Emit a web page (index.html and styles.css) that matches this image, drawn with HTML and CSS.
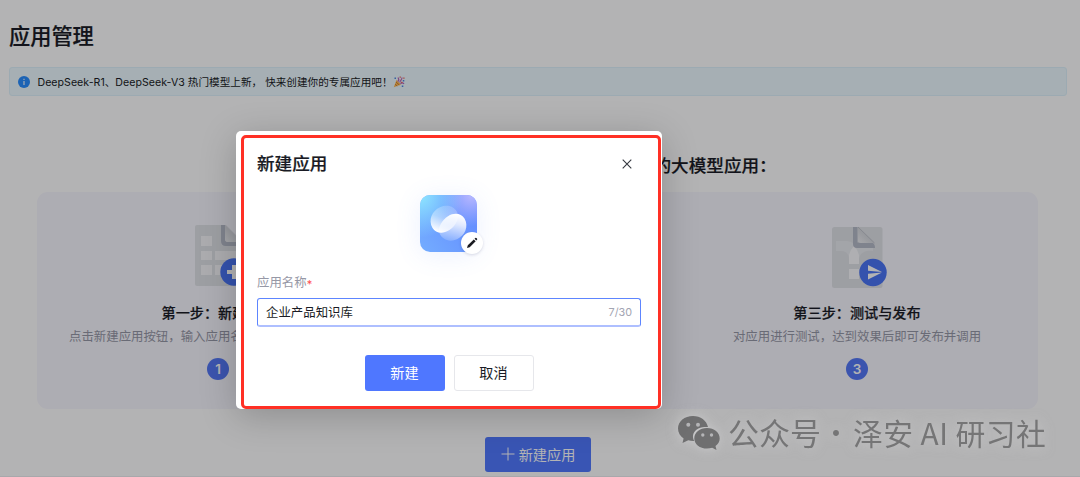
FILE: index.html
```html
<!DOCTYPE html>
<html lang="zh-CN">
<head>
<meta charset="utf-8">
<title>应用管理</title>
<link rel="stylesheet" href="styles.css">
</head>
<body>
<main class="page">
  <h1 class="page-title">应用管理</h1>
  <div class="notice">
    <svg class="notice-icon" viewBox="0 0 12 12"><circle cx="6" cy="6" r="6" fill="#278dff"/><path d="M6 5v4M6 2.8v1.1" stroke="#fff" stroke-width="1.1"/></svg>
    <span class="notice-text">DeepSeek-R1、DeepSeek-V3 热门模型上新， 快来创建你的专属应用吧！</span>
    <svg class="party" viewBox="0 0 12 12"><path d="M.8 11.200 3.500 4l4.500 4.500z" fill="#ffb84c"/><path d="m2 8.200 2.200 2M3 6l3.200 3" stroke="#c97b35" stroke-width=".9"/><path d="M4.800 5.500c1.200-1 1.200-2.500.2-4M6.800 6.500c.5-2.500 2.200-2.500 2.200-5M7.500 7.800c1-1.300 2.200-1 3.600 0" fill="none" stroke="#b765b5" stroke-width="1.200"/><path d="M1.500 1.500H3V3H1.500zM9.800 4h1.500v1.500H9.800zM8.800 9.500h1.500V11H8.800z" fill="#4c89e0"/><path d="M6.600.600h1.200v1.200H6.600zM10.300 1.500h1.200v1.200h-1.200zM8.200 5.800h1.200V7H8.200z" fill="#ef584f"/></svg>
  </div>
  <h2 class="intro">的大模型应用：</h2>
  <section class="steps">
    <article class="step">
      <svg class="step-art" viewBox="0 0 56 64">
        <defs><linearGradient id="fold" x1="0" y1="1" x2=".65" y2=".35"><stop stop-color="#eeeff2"/><stop offset="1" stop-color="#cdd0d6"/></linearGradient></defs>
        <path d="M3 1h29l20 20v38q0 3-3 3H3q-2 0-2-2V3q0-2 2-2" fill="#e0e2e7"/>
        <path d="M27 1h4v14q0 3 3 3h12v4H32q-5 0-5-5z" fill="#b5bac7"/><path d="M31 1 48 18H34q-3 0-3-3z" fill="url(#fold)"/>
        <path d="M7 12h11v10H7zM7 27h11v9H7zM7 41h11v10H7zM21 27h25v9H21zM21 41h25v10H21z" fill="#f5f5f8"/>
        <circle cx="40" cy="48" r="13.700" fill="#4974f5"/><path d="M38 41h4v5h5v4h-5v5h-4v-5h-5v-4h5z" fill="#fff"/>
      </svg>
      <h3>第一步：新建</h3>
      <p class="lead">点击新建应用按钮，输入应用名</p>
      <span class="number">1</span>
    </article>
    <div class="connector"></div>
    <article class="step last">
      <svg class="step-art publish" viewBox="0 0 56 64">
        <rect x="1" y="2" width="50.500" height="61" rx="2.500" fill="#e0e2e7"/>
        <path d="M5 16h9c6 0 9 2 10 6 1-3 3-3 6-3l12 3v4c-9-1-14 3-14 9v4H18v-5c0-5-3-8-8-8H5z" fill="#e9ebef"/>
        <path d="M18 39V30q1-5 5-9 4 4 5 9v9zM18 44h10v10H18z" fill="#fafafc"/>
        <path d="M22 2h4.500v15.500H41q3 1 3 5.500H26q-4 0-4-4z" fill="#b5bac7"/>
        <path d="M27 2 43.500 18H30q-3 0-3-3z" fill="url(#fold)"/>
        <path d="M27 2 43.500 18" stroke="#bfc3ca" stroke-width="1"/>
        <circle cx="42" cy="47.500" r="13.700" fill="#4974f5"/><path d="m37 40 14 7-14-1.200zM37 54.500l14-7-14 1.200z" fill="#fff"/>
      </svg>
      <h3>第三步：测试与发布</h3>
      <p>对应用进行测试，达到效果后即可发布并调用</p>
      <span class="number">3</span>
    </article>
  </section>
  <button class="create"><svg viewBox="0 0 14 14"><path d="M7 .5v13M.5 7h13" stroke="#fff" stroke-width="1"/></svg>新建应用</button>
</main>
<div class="shade"></div>
<div class="watermark">
  <svg viewBox="0 0 42 34"><path d="M15 0C6.500 0 0 5.400 0 12.500c0 4.200 2.200 7.600 5.600 10L4.500 27l5.700-2.700q2.700.8 6 .7C12 16 20 10 30 11 28.600 4.500 22.600 0 15 0z" fill="#6f6f70"/><path d="M29 12c-7.200 0-12.700 4.600-12.700 10.400S21.800 32.500 29 32.500q3 0 5.200-.7l4.300 2.200-1-4c2.600-1.900 4.200-4.500 4.200-7.600C41.700 16.600 36.200 12 29 12z" fill="#6f6f70"/><g fill="#b5b5b7"><circle cx="10.300" cy="8.800" r="2"/><circle cx="20" cy="8.800" r="2"/><circle cx="24.800" cy="19" r="1.700"/><circle cx="33.500" cy="19" r="1.700"/></g></svg>
  <span class="wm-kind">公众号</span><span class="wm-dot">·</span><span class="wm-name">泽安 AI 研习社</span>
</div>
<section class="modal">
  <div class="modal-frame">
    <header class="modal-head"><h2>新建应用</h2><svg class="close" viewBox="0 0 10 10"><path d="m.7.700 8.600 8.600M9.300.7.700 9.300" stroke="#34373f" stroke-width="1.100"/></svg></header>
    <div class="app-icon">
      <svg class="app-art" viewBox="0 0 57 57">
        <defs>
          <linearGradient id="base" x1="0" y1="1" x2="1" y2=".3"><stop stop-color="#74adff"/><stop offset="1" stop-color="#638bff"/></linearGradient>
          <radialGradient id="cyan" cx="0" cy="0" r=".75"><stop stop-color="#8ee8ff"/><stop offset="1" stop-color="#8ee8ff" stop-opacity="0"/></radialGradient>
          <radialGradient id="lilac" cx=".9" cy="0" r=".55"><stop stop-color="#b9b8ff"/><stop offset="1" stop-color="#b9b8ff" stop-opacity="0"/></radialGradient>
          <linearGradient id="lobe1" gradientUnits="userSpaceOnUse" x1="28" y1="12" x2="19" y2="37"><stop stop-color="#fff" stop-opacity=".2"/><stop offset=".45" stop-color="#fff" stop-opacity=".4"/><stop offset="1" stop-color="#fff"/></linearGradient>
          <linearGradient id="lobe2" gradientUnits="userSpaceOnUse" x1="36" y1="19" x2="29" y2="45"><stop stop-color="#fff"/><stop offset=".35" stop-color="#fff" stop-opacity=".8"/><stop offset="1" stop-color="#fff" stop-opacity=".2"/></linearGradient>
        </defs>
        <rect width="57" height="57" rx="10" fill="url(#base)"/><rect width="57" height="57" rx="10" fill="url(#lilac)"/><rect width="57" height="57" rx="10" fill="url(#cyan)"/>
        <path d="M12.500 33C8 25 12 16 20 12.300c7-3.300 15-.8 17.600 6.100 1.600 6-2.500 13-8.600 16.900-6.500 4.200-13.500 2.700-16.500-2.300z" fill="url(#lobe1)"/>
        <path d="M44.500 23.500c4.500 8 .5 17-7.500 20.700-7 3.300-15 .8-17.600-6.100-1.600-6 2.500-13 8.600-16.900 6.500-4.200 13.500-2.700 16.500 2.300z" fill="url(#lobe2)"/>
      </svg>
      <span class="edit"><svg viewBox="0 0 12 12"><path d="m1 11 .8-2.800 6-5.800 1.900 1.900-6 5.900zM8.500 1.700l.9-.8q.5-.4 1 .1l.7.700q.4.500 0 .9l-.8.900z" fill="#191a20"/></svg></span>
    </div>
    <label class="field-label">应用名称<span>*</span></label>
    <div class="field"><span>企业产品知识库</span><span class="count">7/30</span></div>
    <div class="actions"><button class="primary">新建</button><button class="secondary">取消</button></div>
  </div>
</section>
</body>
</html>
```
FILE: styles.css
```css
* { box-sizing: border-box; }
body {
  position: relative;
  width: 1080px;
  height: 477px;
  margin: 0;
  overflow: hidden;
  background: #fff;
  color: #191b24;
  font-family: Inter, "Noto Sans CJK SC", sans-serif;
}
h1, h2, h3, p { margin: 0; }
h1, h2, h3 { -webkit-text-stroke: .2px currentColor; }
button { padding: 0; font-family: inherit; }
svg { display: block; flex: none; }
.page { height: 477px; padding: 21px 13px 0 9px; border-bottom: 1px solid #f0f0f2; }
.page-title { height: 46px; font-size: 21.2px; line-height: 30px; font-weight: 500; }
.notice {
  display: flex;
  align-items: center;
  height: 29px;
  padding-left: 7.500px;
  border: 1px solid #dff3fc;
  border-radius: 3px;
  background: #ecf9ff;
  font-size: 10.6px;
}
.notice-icon { width: 12px; height: 12px; margin-right: 8px; }
.notice-text { white-space: pre; letter-spacing: .025px; }
.party { width: 12px; height: 12px; margin-left: 0; }
.intro { height: 96px; padding: 57px 0 0 644.500px; font-size: 17.600px; line-height: 26px; font-weight: 500; white-space: nowrap; }
.steps {
  display: grid;
  grid-template-columns: 319px 319px 319px;
  width: 1001px;
  height: 217px;
  margin-left: 28px;
  padding: 32px 22px 0 21.500px;
  border-radius: 11px;
  background: #f7f6fe;
}
.step { display: flex; flex-direction: column; align-items: center; white-space: nowrap; }
.last { padding-left: 2px; }
.step-art { width: 56px; height: 64px; margin-left: 8px; }
.publish { margin: 1px 0 -1px 4px; }
.step h3 { margin-top: 14px; font-size: 14.150px; line-height: 22px; font-weight: 500; }
.step:first-child h3 { align-self: flex-start; margin-left: 103px; }
.step p { margin-top: 3px; color: #9698a6; font-size: 12.420px; line-height: 19px; }
.step .lead { align-self: flex-start; margin-left: 10.500px; }
.number {
  width: 22px;
  height: 22px;
  margin-top: 12px;
  border-radius: 50%;
  background: #5478f6;
  color: #fff;
  font-size: 13.500px;
  line-height: 22px;
  font-weight: 600;
  text-align: center;
}
.connector { width: 258px; height: 2px; margin: 144px 0 0; background: #ccdaf8; }
.create {
  display: flex;
  align-items: center;
  justify-content: center;
  gap: 4px;
  width: 106px;
  height: 35px;
  margin: 28px 0 0 476px;
  padding-bottom: 1px;
  border: 0;
  border-radius: 3px;
  background: #5179ff;
  color: #fff;
  font-size: 14.150px;
}
.create svg { width: 14px; height: 14px; }
.shade { position: absolute; inset: 0; background: rgba(2, 2, 6, .3); }
.watermark {
  position: absolute;
  left: 678px;
  top: 408px;
  display: flex;
  align-items: center;
  height: 50px;
  color: #757576;
  font-family: "Noto Sans CJK SC", sans-serif;
  font-size: 30px;
  line-height: 46px;
  font-weight: 400;
  white-space: nowrap;
  filter: drop-shadow(0 0 6px rgba(220, 220, 222, .55));
}
.watermark svg { width: 42px; height: 34px; }
.wm-kind { margin: -2px 0 0 8px; font-size: 31px; }
.wm-dot { width: 30px; margin-top: -2px; font-size: 28px; text-align: center; }
.wm-name { margin: -2px 0 0 2px; font-size: 29.800px; letter-spacing: .45px; }
.modal {
  position: absolute;
  left: 236px;
  top: 131px;
  width: 426px;
  height: 278px;
  padding: 4px 1px 0 5px;
  border-radius: 5px;
  background: #fff;
  box-shadow: 0 7px 36px rgba(0, 0, 0, .21);
}
.modal-frame { height: 274px; padding: 14px 17px 0 13px; border: 3px solid #ff3025; border-radius: 5px; }
.modal-head { display: flex; align-items: center; justify-content: space-between; height: 23px; padding-right: 9px; }
.modal-head h2 { font-size: 17.600px; line-height: 23px; font-weight: 500; }
.close { width: 10px; height: 10px; }
.app-icon { position: relative; width: 57px; height: 57px; margin: 20px 0 0 163px; border-radius: 10px; box-shadow: 0 3px 26px rgba(92, 133, 255, .12); }
.app-art { width: 57px; height: 57px; }
.edit { position: absolute; left: 41px; top: 37px; display: grid; place-items: center; width: 22px; height: 22px; border-radius: 50%; background: #fff; box-shadow: 0 1px 3px rgba(30, 40, 90, .16); }
.edit svg { width: 12px; height: 12px; }
.field-label { display: flex; height: 18px; margin-top: 22px; color: #9698a6; font-size: 12.420px; line-height: 18px; }
.field-label span { color: #ff4d4f; font-size: 11px; line-height: 20px; }
.field {
  display: flex;
  align-items: center;
  justify-content: space-between;
  width: 384px;
  height: 29px;
  margin-top: 6px;
  padding: 0 8px;
  border: 1px solid #5d85ff;
  border-bottom: 2px solid #aebfff;
  border-radius: 3px;
  font-size: 12.420px;
}
.count { color: #a3a5b2; font-size: 10.800px; }
.actions { display: flex; gap: 9px; margin: 28px 0 0 107.500px; }
.actions button { height: 36px; padding-bottom: 2px; border-radius: 3px; font-size: 14.150px; }
.primary { width: 80px; border: 0; background: #4f77ff; color: #fff; }
.secondary { width: 80px; border: 1px solid #e6e7eb; background: #fff; color: #191b24; }
```
